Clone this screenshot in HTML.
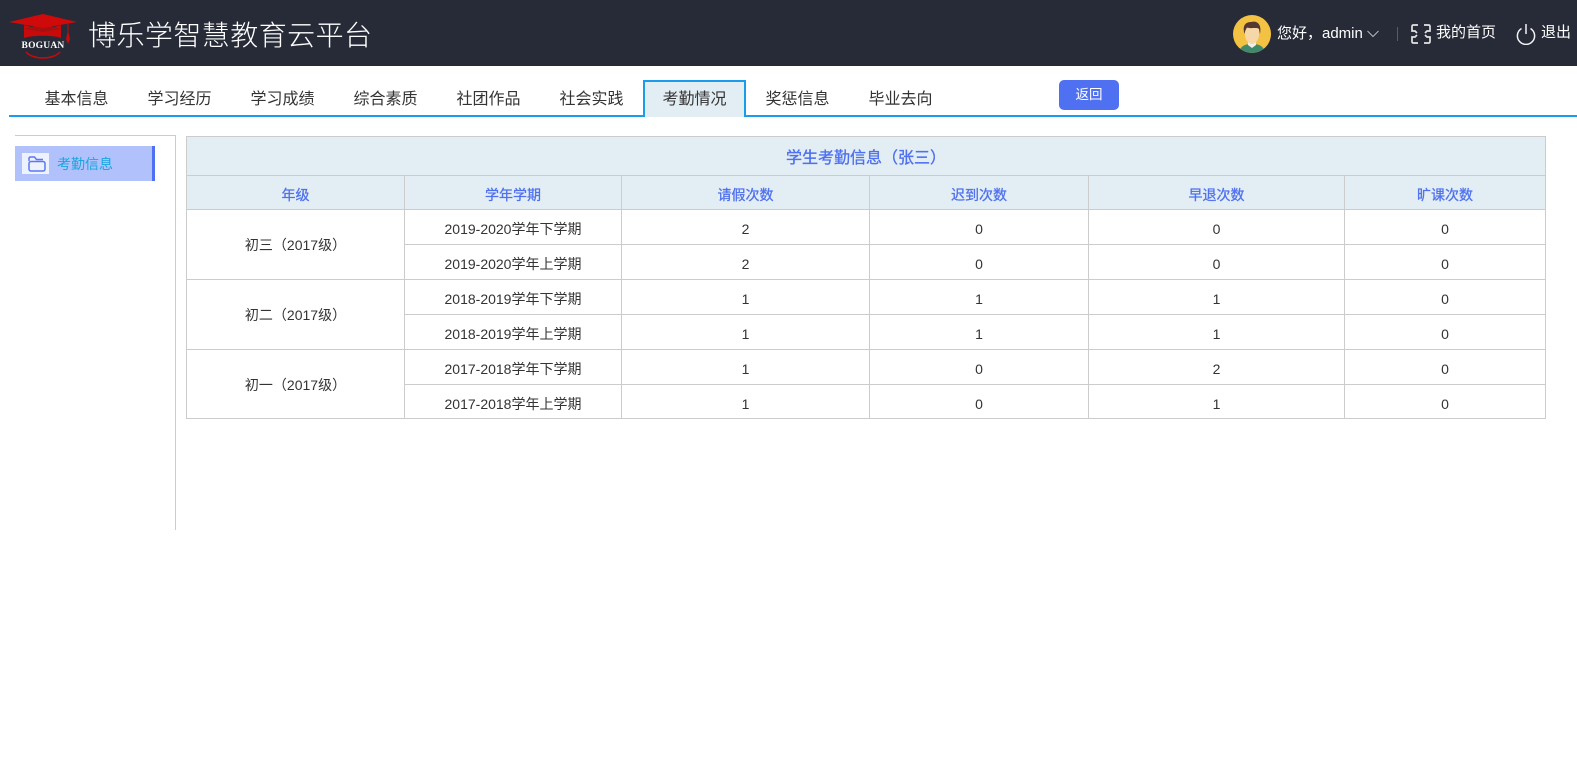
<!DOCTYPE html>
<html lang="zh-CN">
<head>
<meta charset="utf-8">
<title>学生考勤信息</title>
<style>
html,body{margin:0;padding:0;background:#fff;}
body{position:relative;width:1577px;height:767px;overflow:hidden;font-family:"Liberation Sans","Noto Sans CJK SC",sans-serif;color:#333;}
.a{position:absolute;white-space:nowrap;}
#hd{position:absolute;left:0;top:0;width:1577px;height:66px;background:#272b38;}
.w{color:#fff;font-size:15px;line-height:20px;}
.tab{position:absolute;top:81px;width:103px;height:34px;text-align:center;font-size:16px;line-height:37px;color:#333;}
#line{position:absolute;left:9px;top:115px;width:1568px;height:2px;background:#1a9bec;}
#active{position:absolute;left:643px;top:80px;width:103px;height:37px;box-sizing:border-box;border:2px solid #1a9bec;border-bottom:0;background:#e2eef3;text-align:center;font-size:16px;line-height:35px;color:#333;}
#back{position:absolute;left:1059px;top:80px;width:60px;height:30px;background:#4f70f0;border-radius:5px;color:#fff;font-size:13.5px;line-height:30px;text-align:center;}
#side{position:absolute;left:15px;top:135px;width:161px;height:395px;box-sizing:border-box;border-top:1px solid #ccc;border-right:1px solid #ccc;}
#item{position:absolute;left:15px;top:146px;width:140px;height:35px;box-sizing:border-box;background:#b0c1fb;border-right:3px solid #4f70f0;}
#ibox{position:absolute;left:7px;top:7px;width:27px;height:21px;background:#eef1fe;}
#itxt{position:absolute;left:42px;top:8px;font-size:14px;line-height:21px;color:#1aa5e0;white-space:nowrap;}
table{position:absolute;left:186px;top:136px;border-collapse:separate;border-spacing:0;table-layout:fixed;width:1359px;border-left:1px solid #ccc;border-top:1px solid #ccc;}
td,th{box-sizing:border-box;padding:0;border-right:1px solid #ccc;border-bottom:1px solid #ccc;text-align:center;font-size:14px;color:#333;font-weight:normal;}
tr.t th{height:39px;background:#e2eef3;color:#4f70f0;font-size:16px;-webkit-text-stroke:.35px #4f70f0;}
tr.h th{height:34px;background:#e2eef3;color:#4f70f0;font-size:14px;padding-top:4px;-webkit-text-stroke:.3px #4f70f0;}
tr.r td{height:35px;padding-top:4px;}
tr.l td{height:34px;padding-top:5px;}
tr.r td.s{padding-top:0;}
tr.r td.s3{padding-top:2px;}
</style>
</head>
<body>
<div id="hd"></div>

<svg class="a" style="left:8px;top:13px" width="70" height="47" viewBox="0 0 70 47">
  <path d="M16,12 L35,17 L53,12 V25 C45,22 25,22 16,25 Z" fill="#c80a0a"/>
  <path d="M16,16 L35,11 L53,16 L35,19 Z" fill="#a81010"/>
  <polygon points="35,1 69,9 35,15 1,9" fill="#d00a0a"/>
  <path d="M60,10 V18" stroke="#c80a0a" stroke-width="1"/>
  <path d="M60,17 L62,26 L60,31 L58,26 Z" fill="#c80a0a"/>
  <path d="M18,39 C25,47 45,47 52,39" fill="none" stroke="#c80a0a" stroke-width="1.5"/>
  <text x="35" y="35" text-anchor="middle" font-family="Liberation Serif,serif" font-weight="bold" font-size="9.5" letter-spacing=".2" fill="#fff">BOGUAN</text>
</svg>
<div class="a" style="left:88px;top:17px;font-size:28px;line-height:34px;letter-spacing:.45px;color:#fff;font-family:'Noto Sans CJK SC','WenQuanYi Zen Hei',sans-serif;font-weight:300;">博乐学智慧教育云平台</div>

<svg class="a" style="left:1233px;top:15px" width="38" height="38" viewBox="0 0 38 38">
  <defs><clipPath id="c"><circle cx="19" cy="19" r="19"/></clipPath></defs>
  <circle cx="19" cy="19" r="19" fill="#f4c242"/>
  <g clip-path="url(#c)">
    <path d="M6,38 C7,31 12,29 19,29 C26,29 31,31 32,38 Z" fill="#3f8a6c"/>
    <path d="M15,25 H23 V30 L19,33 L15,30 Z" fill="#f3efe4"/>
    <path d="M12,13 H26 V20 C26,25 22,29 19,29 C16,29 12,25 12,20 Z" fill="#f6d7a8"/>
    <path d="M11.5,19 C9,10 13,7 18,7 C24,5.5 29,9 27,19 L26,14 C24,12 18,14 14,12.5 C13,14 12,16 11.5,19 Z" fill="#55392f"/>
  </g>
</svg>
<div class="a w" style="left:1277px;top:24px;">您好，admin</div>
<svg class="a" style="left:1367px;top:30px" width="12" height="8" viewBox="0 0 12 8"><path d="M0.5,1 L6,6.5 L11.5,1" fill="none" stroke="#b8b8b8" stroke-width="1"/></svg>
<div class="a" style="left:1397px;top:27px;width:1px;height:14px;background:#5c5c60;"></div>
<svg class="a" style="left:1411px;top:24px" width="20" height="20" viewBox="0 0 20 20" fill="none" stroke="#e4e4e4" stroke-width="1.7">
  <path d="M7,1 H2.5 Q1,1 1,2.5 V7 H4 L6,9"/>
  <path d="M13,1 H17.5 Q19,1 19,2.5 V7 H16 L14,9"/>
  <path d="M7,19 H2.5 Q1,19 1,17.5 V13 H4 L6,11"/>
  <path d="M13,19 H17.5 Q19,19 19,17.5 V13 H16 L14,11"/>
</svg>
<div class="a w" style="left:1436px;top:23px;">我的首页</div>
<svg class="a" style="left:1516px;top:23px" width="20" height="22" viewBox="0 0 20 22" fill="none" stroke="#f2f2f2" stroke-width="1.5">
  <path d="M5.5,5.5 A8.6,8.6 0 1 0 14.5,5.5"/>
  <path d="M10,1 V11"/>
</svg>
<div class="a w" style="left:1541px;top:23px;">退出</div>

<div id="line"></div>
<div class="tab" style="left:25px">基本信息</div>
<div class="tab" style="left:128px">学习经历</div>
<div class="tab" style="left:231px">学习成绩</div>
<div class="tab" style="left:334px">综合素质</div>
<div class="tab" style="left:437px">社团作品</div>
<div class="tab" style="left:540px">社会实践</div>
<div id="active">考勤情况</div>
<div class="tab" style="left:746px">奖惩信息</div>
<div class="tab" style="left:849px">毕业去向</div>
<div id="back">返回</div>

<div id="side"></div>
<div id="item">
  <div id="ibox">
    <svg style="position:absolute;left:6px;top:3px" width="18" height="16" viewBox="0 0 18 16" fill="none" stroke="#5a78f2" stroke-width="1.5">
      <path d="M1,5 V2.5 Q1,1 2.5,1 H6.5 L8.5,3.5 H15"/>
      <rect x="1" y="5.5" width="16" height="9.5" rx="2"/>
    </svg>
  </div>
  <div id="itxt">考勤信息</div>
</div>

<table>
  <colgroup><col style="width:218px"><col style="width:217px"><col style="width:248px"><col style="width:219px"><col style="width:256px"><col style="width:201px"></colgroup>
  <tr class="t"><th colspan="6">学生考勤信息（张三）</th></tr>
  <tr class="h"><th>年级</th><th>学年学期</th><th>请假次数</th><th>迟到次数</th><th>早退次数</th><th>旷课次数</th></tr>
  <tr class="r"><td class="s" rowspan="2">初三（2017级）</td><td>2019-2020学年下学期</td><td>2</td><td>0</td><td>0</td><td>0</td></tr>
  <tr class="r"><td>2019-2020学年上学期</td><td>2</td><td>0</td><td>0</td><td>0</td></tr>
  <tr class="r"><td class="s" rowspan="2">初二（2017级）</td><td>2018-2019学年下学期</td><td>1</td><td>1</td><td>1</td><td>0</td></tr>
  <tr class="r"><td>2018-2019学年上学期</td><td>1</td><td>1</td><td>1</td><td>0</td></tr>
  <tr class="r"><td class="s s3" rowspan="2">初一（2017级）</td><td>2017-2018学年下学期</td><td>1</td><td>0</td><td>2</td><td>0</td></tr>
  <tr class="l"><td>2017-2018学年上学期</td><td>1</td><td>0</td><td>1</td><td>0</td></tr>
</table>
</body>
</html>
